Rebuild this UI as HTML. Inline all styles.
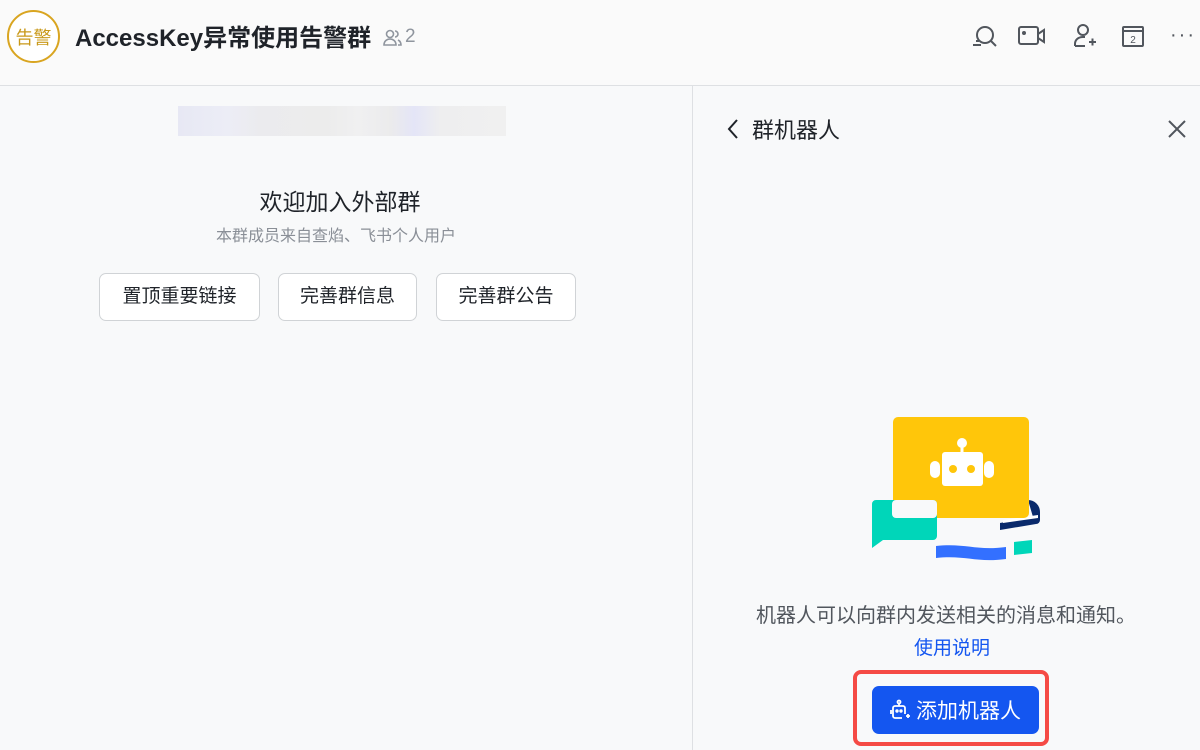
<!DOCTYPE html>
<html><head><meta charset="utf-8"><style>
*{margin:0;padding:0;box-sizing:border-box}
body{width:1200px;height:750px;background:#f8f9fa;font-family:"Liberation Sans","Noto Sans CJK SC",sans-serif;position:relative;overflow:hidden;color:#1f2329}
.abs{position:absolute}
.hdr{left:0;top:0;width:1200px;height:86px;background:#fafafa;border-bottom:1px solid #dee0e3}
.btn{position:absolute;top:273px;height:48px;border:1px solid #d0d3d6;border-radius:7px;background:#fff;font-size:19px;line-height:46px;text-align:center;color:#1f2329}
</style></head><body>
<div class="abs hdr"></div>
<div class="abs" style="left:7px;top:10px;width:53px;height:53px;border:2px solid #d9a521;border-radius:50%;color:#c9991a;font-size:18px;line-height:53px;text-align:center;background:#fff">告警</div>
<div class="abs" style="left:75px;top:18px;font-size:24px;font-weight:bold;color:#1f2329">AccessKey异常使用告警群</div>
<svg class="abs" style="left:383px;top:28px" width="20" height="20" viewBox="0 0 20 20" fill="none" stroke="#8f959e" stroke-width="1.6"><circle cx="7" cy="6" r="3.5"/><path d="M1 17c0-4 3-6 6-6s6 2 6 6z"/><path d="M12 3a3 3 0 010 6M15 12c2 1 3 3 3 5h-3"/></svg>
<div class="abs" style="left:405px;top:26px;font-size:19px;color:#8f959e">2</div>
<svg class="abs" style="left:970px;top:24px" width="28" height="26" viewBox="0 0 28 26" fill="none" stroke="#51565d" stroke-width="2"><circle cx="15" cy="11" r="8"/><path d="M21 17l5 5M3 21h8M6 17h3"/></svg>
<svg class="abs" style="left:1018px;top:25px" width="28" height="22" viewBox="0 0 28 22" fill="none" stroke="#51565d" stroke-width="2"><rect x="1" y="2" width="19" height="17" rx="2"/><path d="M20 9l6-4v12l-6-4"/><circle cx="6" cy="8" r="1" fill="#51565d"/></svg>
<svg class="abs" style="left:1072px;top:23px" width="26" height="26" viewBox="0 0 26 26" fill="none" stroke="#51565d" stroke-width="2"><circle cx="11" cy="7" r="5"/><path d="M3 23v-2c0-4 3-7 8-7h2M3 23h10M17 19h7M20.5 15.5v7"/></svg>
<svg class="abs" style="left:1122px;top:25px" width="22" height="22" viewBox="0 0 22 22" fill="none" stroke="#51565d" stroke-width="2"><rect x="1" y="2" width="20" height="19" rx="1"/><path d="M1 6h20"/><text x="11" y="18" font-size="10" text-anchor="middle" fill="#51565d" stroke="none" font-family="Liberation Sans">2</text></svg>
<div class="abs" style="left:1170px;top:24px;font-size:20px;color:#51565d;letter-spacing:2px">···</div>

<div class="abs" style="left:692px;top:86px;width:1px;height:664px;background:#dee0e3"></div>
<div class="abs" style="left:178px;top:106px;width:328px;height:30px;background:linear-gradient(90deg,#e7e8f4,#ecedf6 15%,#ebebee 25%,#ececec 45%,#f0f0f1 55%,#ebebec 65%,#e4e5f7 72%,#eeeeef 80%,#f0f0f0 100%)"></div>
<div class="abs" style="left:0;width:680px;top:183px;text-align:center;font-size:23px;color:#1f2329">欢迎加入外部群</div>
<div class="abs" style="left:0;width:672px;top:222px;text-align:center;font-size:16px;color:#8a8f97">本群成员来自查焰、飞书个人用户</div>
<div class="btn" style="left:99px;width:161px">置顶重要链接</div>
<div class="btn" style="left:278px;width:139px">完善群信息</div>
<div class="btn" style="left:436px;width:140px">完善群公告</div>

<svg class="abs" style="left:726px;top:118px" width="14" height="22" viewBox="0 0 14 22" fill="none" stroke="#1f2329" stroke-width="2"><path d="M11 2L3 11l8 9"/></svg>
<div class="abs" style="left:752px;top:113px;font-size:22px;color:#1f2329">群机器人</div>
<svg class="abs" style="left:1167px;top:119px" width="20" height="20" viewBox="0 0 20 20" stroke="#51565d" stroke-width="2"><path d="M2 2l16 16M18 2L2 18"/></svg>

<svg class="abs" style="left:850px;top:400px" width="220" height="170" viewBox="0 0 220 170">
<path d="M178 100a12 12 0 0 1 12 12v8a4 4 0 0 1-4 4l-36 6v-7l33-6z" fill="#0a2a6b"/>
<path d="M153 123l35-5v-3l-35 5z" fill="#fff"/>
<rect x="43" y="17" width="136" height="101" rx="5" fill="#ffc60a"/>
<circle cx="112" cy="43" r="5" fill="#fff"/><rect x="110.5" y="45" width="3" height="8" fill="#fff"/>
<rect x="92" y="52" width="41" height="34" rx="3" fill="#fff"/>
<rect x="80" y="61" width="10" height="17" rx="5" fill="#fff"/><rect x="134" y="61" width="10" height="17" rx="5" fill="#fff"/>
<circle cx="103" cy="69" r="4" fill="#ffc60a"/><circle cx="121" cy="69" r="4" fill="#ffc60a"/>
<path d="M28 100h55a4 4 0 0 1 4 4v32a4 4 0 0 1-4 4H33l-11 8v-44a4 4 0 0 1 4-4z" fill="#00d6b9"/>
<rect x="42" y="100" width="45" height="18" rx="4" fill="#f8f9fa"/>
<path d="M86 146c30-3 40 5 70 1v12c-30 4-40-4-70-1z" fill="#3370ff"/>
<path d="M164 142l18-2v13l-18 2z" fill="#00d6b9"/>
</svg>

<div class="abs" style="left:692px;width:508px;top:599px;text-align:center;font-size:20px;color:#51565d">机器人可以向群内发送相关的消息和通知。</div>
<div class="abs" style="left:914px;top:633px;font-size:19px;color:#1456f0">使用说明</div>
<div class="abs" style="left:853px;top:670px;width:196px;height:76px;border:4px solid #f54a45;border-radius:8px"></div>
<div class="abs" style="left:872px;top:686px;width:167px;height:48px;background:#1456f0;border-radius:7px"></div>
<svg class="abs" style="left:889px;top:699px" width="22" height="22" viewBox="0 0 22 22" fill="none" stroke="#fff" stroke-width="1.8"><circle cx="10" cy="3" r="1.5"/><path d="M10 5v2M16 15v-6a2 2 0 0 0-2-2H6a2 2 0 0 0-2 2v8a2 2 0 0 0 2 2h7M2 11v4M17 17h4M19 15v4"/><circle cx="8" cy="12" r=".8" fill="#fff"/><circle cx="12" cy="12" r=".8" fill="#fff"/></svg>
<div class="abs" style="left:916px;top:695px;font-size:21px;color:#fff">添加机器人</div>
</body></html>
